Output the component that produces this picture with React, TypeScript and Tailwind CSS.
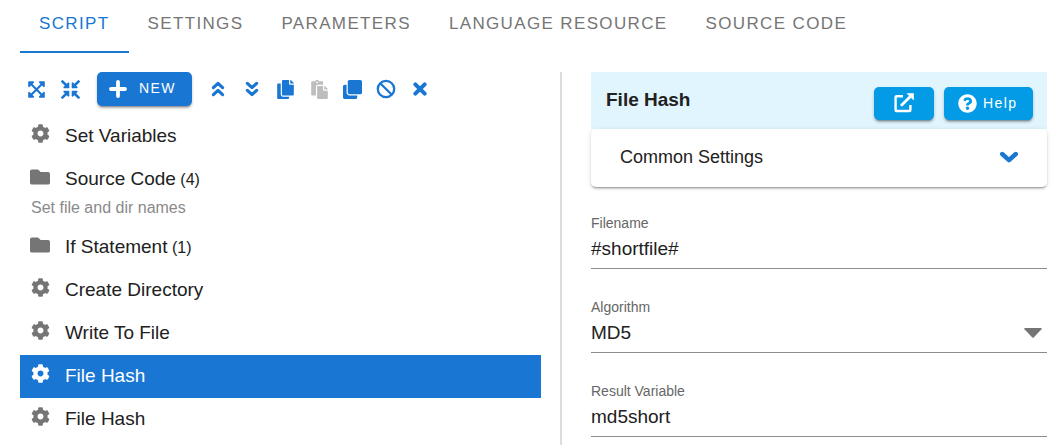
import { useState } from "react";
import type { ReactNode } from "react";
import {
  FaExpandArrowsAlt,
  FaCompressArrowsAlt,
  FaCog,
  FaCopy,
  FaPaste,
  FaClone,
  FaFolder,
  FaQuestionCircle,
} from "react-icons/fa";

const tabs = ["Script", "Settings", "Parameters", "Language Resource", "Source Code"];

type Action = { name: string; kind: "step" | "group"; count?: number; note?: string };

const actions: Action[] = [
  { name: "Set Variables", kind: "step" },
  { name: "Source Code", kind: "group", count: 4, note: "Set file and dir names" },
  { name: "If Statement", kind: "group", count: 1 },
  { name: "Create Directory", kind: "step" },
  { name: "Write To File", kind: "step" },
  { name: "File Hash", kind: "step" },
  { name: "File Hash", kind: "step" },
];

function StrokeIcon({ d, width }: { d: string; width: number }) {
  return (
    <svg
      viewBox="0 0 20 20"
      className="size-5"
      fill="none"
      stroke="currentColor"
      strokeWidth={width}
      strokeLinecap="round"
      strokeLinejoin="round"
      aria-hidden="true"
    >
      <path d={d} />
    </svg>
  );
}

function BanIcon() {
  return (
    <svg viewBox="0 0 20 20" className="size-5" fill="none" stroke="currentColor" strokeWidth="2.3" aria-hidden="true">
      <circle cx="10" cy="10" r="8.2" />
      <path d="M4.2 4.2 15.8 15.8" />
    </svg>
  );
}

function OpenIcon() {
  return (
    <svg viewBox="0 0 20 20" className="size-5" fill="none" stroke="currentColor" aria-hidden="true">
      <path d="M9 3.2H2.6Q1.6 3.2 1.6 4.2V17Q1.6 18 2.6 18H15.4Q16.4 18 16.4 17V12" strokeWidth="2.4" />
      <path d="M7 12.8 16.4 3.4" strokeWidth="2.8" />
      <path d="M13 .4H19.6V7Z" fill="currentColor" strokeWidth=".6" strokeLinejoin="round" />
    </svg>
  );
}

function Tool({ label, disabled, children }: { label: string; disabled?: boolean; children: ReactNode }) {
  return (
    <button
      type="button"
      aria-label={label}
      disabled={disabled}
      className="flex h-[34px] flex-1 items-center justify-center text-[#1976d2] disabled:text-[#bdbdbd]"
    >
      {children}
    </button>
  );
}

const fieldClass =
  "h-8 w-full appearance-none rounded-none border-b border-[#8c8c8c] bg-transparent pb-2 text-[19px] leading-[22px] text-[#212121] outline-none";

function Field({ id, label, children }: { id: string; label: string; children: ReactNode }) {
  return (
    <div className="flex flex-col gap-1">
      <label htmlFor={id} className="text-[14px] leading-5 text-[#666666]">
        {label}
      </label>
      {children}
    </div>
  );
}

export default function App() {
  const [tab, setTab] = useState(0);
  const [selected, setSelected] = useState(5);

  return (
    <div className="flex min-h-screen flex-col bg-white pr-3 pl-5 font-['Liberation_Sans',Arial,sans-serif] text-[#212121]">
      <nav role="tablist" className="flex">
        {tabs.map((name, i) => (
          <button
            key={name}
            type="button"
            role="tab"
            aria-selected={i === tab}
            onClick={() => setTab(i)}
            className="h-[53px] border-b-2 border-transparent px-[19px] pb-1 text-[17px] leading-none tracking-[0.08em] whitespace-nowrap text-[#757575] uppercase aria-selected:border-[#1976d2] aria-selected:text-[#1976d2]"
          >
            {name}
          </button>
        ))}
      </nav>

      <main className="mt-[19px] grid grow grid-cols-[540fr_487fr]">
        <section className="pr-[19px]">
          <div className="flex h-[34px] items-center">
            <div className="flex w-[67px]">
              <Tool label="Expand all">
                <FaExpandArrowsAlt className="size-[19px]" />
              </Tool>
              <Tool label="Collapse all">
                <FaCompressArrowsAlt className="size-[19px]" />
              </Tool>
            </div>
            <button
              type="button"
              className="mr-[9px] ml-2.5 flex h-[34px] w-[95px] items-center gap-[11px] rounded-[5px] bg-[#1976d2] pl-[11px] text-[14px] tracking-widest text-white uppercase shadow-[0_3px_2px_-2px_rgba(0,0,0,0.3),0_2px_3px_rgba(0,0,0,0.25)]"
            >
              <StrokeIcon d="M10 3V17M3 10H17" width={3.8} />
              <span className="pb-0.5">New</span>
            </button>
            <div className="flex w-[236px]">
              <Tool label="Move up">
                <StrokeIcon d="M5.4 8.6 10 4.4 14.6 8.6M5.4 15.6 10 11.4 14.6 15.6" width={3.2} />
              </Tool>
              <Tool label="Move down">
                <StrokeIcon d="M5.4 4.4 10 8.6 14.6 4.4M5.4 11.4 10 15.6 14.6 11.4" width={3.2} />
              </Tool>
              <Tool label="Copy">
                <FaCopy className="size-[19px]" />
              </Tool>
              <Tool label="Paste" disabled>
                <FaPaste className="size-[19px]" />
              </Tool>
              <Tool label="Duplicate">
                <FaClone className="size-[19px]" />
              </Tool>
              <Tool label="Disable">
                <BanIcon />
              </Tool>
              <Tool label="Delete">
                <StrokeIcon d="M5.3 5.3 14.7 14.7M14.7 5.3 5.3 14.7" width={4} />
              </Tool>
            </div>
          </div>

          <ul className="mt-[9px]">
            {actions.map((a, i) => (
              <li key={i}>
                <button
                  type="button"
                  aria-pressed={i === selected}
                  onClick={() => setSelected(i)}
                  className="group flex h-[43px] w-full items-center gap-3.5 pl-[9px] text-left text-[19px] aria-pressed:bg-[#1976d2] aria-pressed:text-white"
                >
                  <span className="flex w-[22px] justify-center pb-1.5 text-[#757575] group-aria-pressed:text-white">
                    {a.kind === "step" ? <FaCog className="size-[19px]" /> : <FaFolder className="size-5" />}
                  </span>
                  <span>
                    {a.name}
                    {a.count && <span className="text-[16px]"> ({a.count})</span>}
                  </span>
                </button>
                {a.note && <p className="h-[25px] pl-[11px] text-[16px] leading-[14px] text-[#8a8a8a]">{a.note}</p>}
              </li>
            ))}
          </ul>
        </section>

        <section className="border-l-2 border-[#dcdcdc] pl-[29px]">
          <header className="flex h-[57px] justify-between bg-[#e1f5fe] pr-3.5 pl-[15px]">
            <h2 className="pt-4 text-[19px] leading-6 font-bold">File Hash</h2>
            <div className="flex gap-2.5 pt-[15px]">
              <button
                type="button"
                aria-label="Open in new window"
                className="flex h-[33px] w-[60px] items-center justify-center rounded-[5px] bg-[#039be5] pb-0.5 text-white shadow-[0_3px_2px_-2px_rgba(0,0,0,0.3),0_2px_3px_rgba(0,0,0,0.25)]"
              >
                <OpenIcon />
              </button>
              <button
                type="button"
                className="flex h-[33px] w-[89px] items-center gap-1.5 rounded-[5px] bg-[#039be5] pl-3.5 text-[14px] tracking-widest text-white shadow-[0_3px_2px_-2px_rgba(0,0,0,0.3),0_2px_3px_rgba(0,0,0,0.25)]"
              >
                <FaQuestionCircle className="size-[19px]" />
                Help
              </button>
            </div>
          </header>
          <button
            type="button"
            aria-expanded={false}
            className="flex h-[58px] w-full items-center justify-between rounded-[5px] bg-white pr-7 pb-0.5 pl-[29px] text-[18px] shadow-[0_3px_1px_-2px_rgba(0,0,0,0.2),0_2px_2px_rgba(0,0,0,0.14),0_1px_5px_rgba(0,0,0,0.12)]"
          >
            Common Settings
            <span className="text-[#1976d2]">
              <StrokeIcon d="M3.2 7 10 13.2 16.8 7" width={4.4} />
            </span>
          </button>

          <form className="mt-[26px] flex flex-col gap-7">
            <Field id="filename" label="Filename">
              <input id="filename" type="text" defaultValue="#shortfile#" className={fieldClass} />
            </Field>
            <Field id="algorithm" label="Algorithm">
              <div className="relative flex">
                <select id="algorithm" defaultValue="MD5" className={fieldClass}>
                  <option>MD5</option>
                </select>
                <svg
                  viewBox="0 0 18 10"
                  className="pointer-events-none absolute top-[7px] right-[5px] h-2.5 w-[18px] fill-[#757575]"
                  aria-hidden="true"
                >
                  <path d="M1 0h16q1.2.2.5 1.2L9.7 9.4q-.7.7-1.4 0L.5 1.2Q-.2.2 1 0Z" />
                </svg>
              </div>
            </Field>
            <Field id="result" label="Result Variable">
              <input id="result" type="text" defaultValue="md5short" className={fieldClass} />
            </Field>
          </form>
        </section>
      </main>
    </div>
  );
}
